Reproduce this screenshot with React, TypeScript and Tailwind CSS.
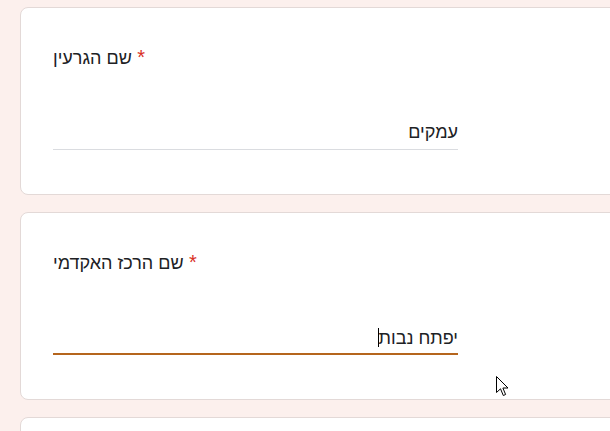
import React from 'react';

interface FieldProps {
  label?: string;
  value?: string;
  focused?: boolean;
}

const Field: React.FC<FieldProps> = (props) => {
  return (
    <div className="h-[188px] w-[700px] shrink-0 rounded-lg border border-[#e3d9d7] bg-white pl-[32px] pt-[37px]">
      {props.label && (
        <>
          <div className="h-6 text-[18px] leading-6 text-[#202124]">
            {props.label}
            <span className="text-[20px] text-[#d93025]"> *</span>
          </div>
          <div className="relative mt-[51px] w-[405px] border-b border-[#dadce0] pb-[5px]">
            <div dir="rtl" className="h-6 text-right text-[18px] leading-6 text-[#202124]">
              {props.value}
              {props.focused && <span className="inline-block h-[19px] w-px translate-y-[3px] bg-black align-baseline" />}
            </div>
            {props.focused && <div className="absolute -bottom-px left-0 right-0 h-[2px] bg-[#b5651d]" />}
          </div>
        </>
      )}
    </div>
  );
};

const App: React.FC = () => {
  return (
    <div className="relative h-[431px] w-[610px] overflow-hidden bg-[#fcf0ed] font-['Liberation_Sans',_Arial,_sans-serif]">
      <div className="flex flex-col gap-[17px] pl-[20px] pt-[7px]">
        <Field label="שם הגרעין" value="עמקים" />
        <Field label="שם הרכז האקדמי" value="יפתח נבות" focused />
        <Field />
      </div>
      <svg className="absolute left-[496px] top-[376px]" width="14" height="21" viewBox="0 0 14 21">
        <path d="M0.5 0.5 L0.5 16.5 L4.5 12.8 L7.3 19.5 L9.6 18.5 L6.9 12 L12 12 Z" fill="white" stroke="black" strokeWidth="1" strokeLinejoin="round" />
      </svg>
    </div>
  );
};

export default App;
